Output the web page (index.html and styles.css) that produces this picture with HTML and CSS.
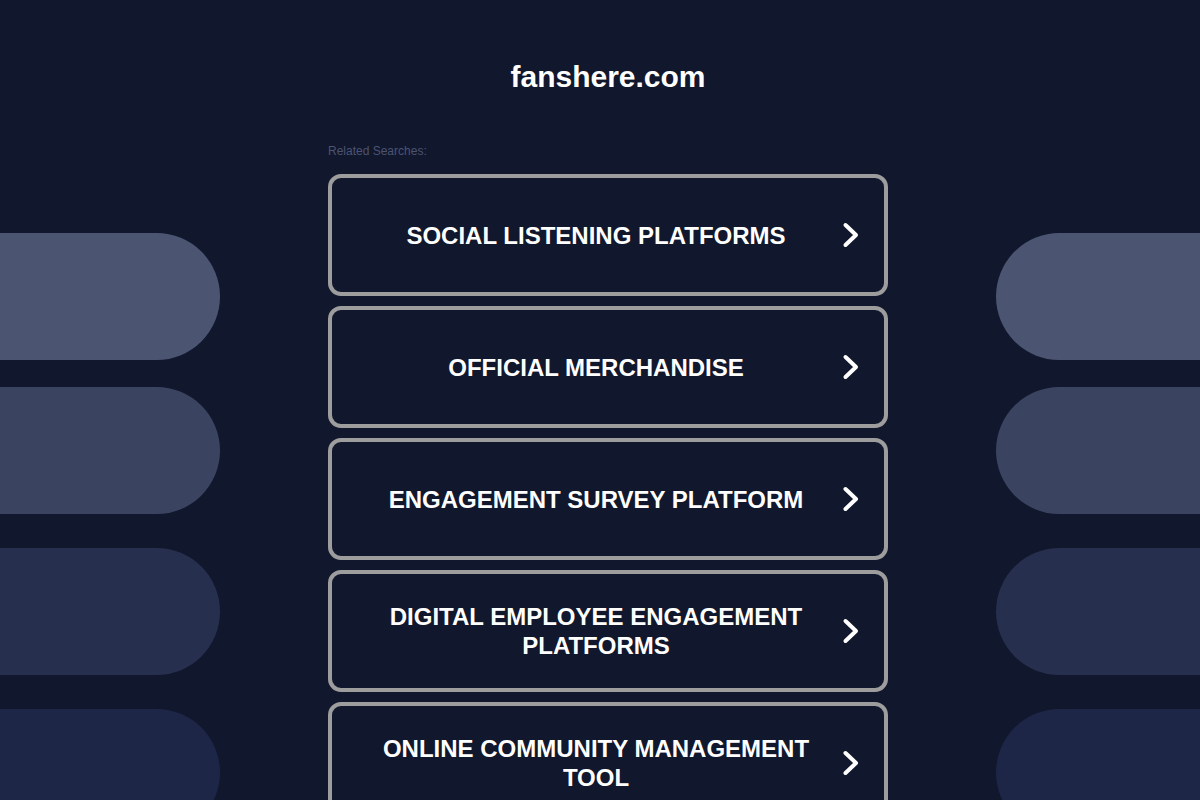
FILE: index.html
```html
<!DOCTYPE html>
<html lang="en">
<head>
<meta charset="utf-8">
<title>fanshere.com</title>
<link rel="stylesheet" href="styles.css">
</head>
<body>
<div class="page">
  <aside class="side side-left">
    <div class="pill pill-1"></div>
    <div class="pill pill-2"></div>
    <div class="pill pill-3"></div>
    <div class="pill pill-4"></div>
  </aside>
  <main class="center">
    <h1 class="title">fanshere.com</h1>
    <div class="related">Related Searches:</div>
    <ul class="links">
      <li><a class="link" href="#"><span class="link-text">SOCIAL LISTENING PLATFORMS</span><svg class="chev" viewBox="0 0 20 30" width="20" height="30"><polyline points="4.5,5 15,15 4.5,25" fill="none" stroke="#fff" stroke-width="4" stroke-linecap="round" stroke-linejoin="round"/></svg></a></li>
      <li><a class="link" href="#"><span class="link-text">OFFICIAL MERCHANDISE</span><svg class="chev" viewBox="0 0 20 30" width="20" height="30"><polyline points="4.5,5 15,15 4.5,25" fill="none" stroke="#fff" stroke-width="4" stroke-linecap="round" stroke-linejoin="round"/></svg></a></li>
      <li><a class="link" href="#"><span class="link-text">ENGAGEMENT SURVEY PLATFORM</span><svg class="chev" viewBox="0 0 20 30" width="20" height="30"><polyline points="4.5,5 15,15 4.5,25" fill="none" stroke="#fff" stroke-width="4" stroke-linecap="round" stroke-linejoin="round"/></svg></a></li>
      <li><a class="link" href="#"><span class="link-text">DIGITAL EMPLOYEE ENGAGEMENT PLATFORMS</span><svg class="chev" viewBox="0 0 20 30" width="20" height="30"><polyline points="4.5,5 15,15 4.5,25" fill="none" stroke="#fff" stroke-width="4" stroke-linecap="round" stroke-linejoin="round"/></svg></a></li>
      <li><a class="link" href="#"><span class="link-text">ONLINE COMMUNITY MANAGEMENT TOOL</span><svg class="chev" viewBox="0 0 20 30" width="20" height="30"><polyline points="4.5,5 15,15 4.5,25" fill="none" stroke="#fff" stroke-width="4" stroke-linecap="round" stroke-linejoin="round"/></svg></a></li>
    </ul>
  </main>
  <aside class="side side-right">
    <div class="pill pill-1"></div>
    <div class="pill pill-2"></div>
    <div class="pill pill-3"></div>
    <div class="pill pill-4"></div>
  </aside>
</div>
</body>
</html>
```

FILE: styles.css
```css
html, body {
  margin: 0;
  padding: 0;
  background: #11172c;
  height: 800px;
  overflow: hidden;
}

body {
  font-family: "Liberation Sans", Arial, sans-serif;
  color: #ffffff;
}

.page {
  display: grid;
  grid-template-columns: 220px 1fr 204px;
  height: 800px;
}

.side {
  display: flex;
  flex-direction: column;
  padding-top: 233px;
}

.pill {
  height: 127px;
  flex: none;
}

.pill-2 { margin-top: 27px; }
.pill-3 { margin-top: 34px; }
.pill-4 { margin-top: 34px; }

.side-left .pill { border-radius: 0 64px 64px 0; }
.side-right .pill { border-radius: 64px 0 0 64px; }

.pill-1 { background: #4b5572; }
.pill-2 { background: #3a4461; }
.pill-3 { background: #262f4e; }
.pill-4 { background: #1d2647; }

.center {
  display: flex;
  flex-direction: column;
  align-items: center;
}

.title {
  margin: 59px 0 0;
  font-size: 30px;
  line-height: 36px;
  font-weight: bold;
  color: #ffffff;
}

.related {
  width: 560px;
  margin-top: 49px;
  font-size: 12px;
  line-height: 14px;
  color: #4b5472;
}

.links {
  list-style: none;
  margin: 16px 0 0;
  padding: 0;
  width: 560px;
  display: flex;
  flex-direction: column;
  gap: 10px;
}

.link {
  box-sizing: border-box;
  height: 122px;
  display: flex;
  align-items: center;
  padding: 0 23px 0 19px;
  border: 4px solid #9d9d9d;
  border-radius: 13px;
  text-decoration: none;
  color: #ffffff;
}

.link-text {
  flex: 1;
  text-align: center;
  font-size: 24px;
  line-height: 29px;
  font-weight: bold;
}

.chev {
  flex: none;
  display: block;
}
```
